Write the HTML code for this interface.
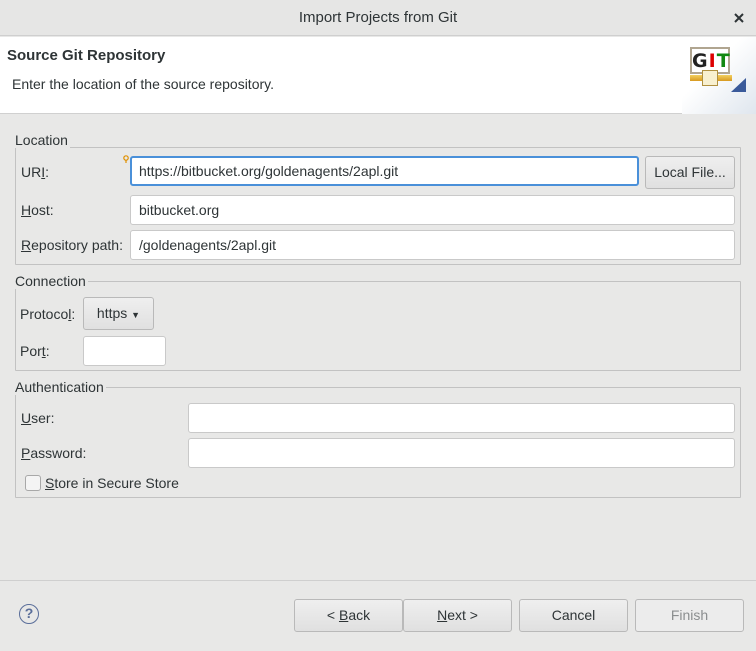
<!DOCTYPE html>
<html><head><meta charset="utf-8"><style>
*{box-sizing:border-box;margin:0;padding:0}
body{width:756px;height:651px;overflow:hidden;background:#e8e8e7;font-family:"Liberation Sans",sans-serif;font-size:14px;color:#2e3436;position:relative}
.a{position:absolute}
.title{left:0;top:0;width:756px;height:36px;background:#e6e6e5;border-bottom:1px solid #cfcfcf;text-align:center;line-height:36px;color:#2e3436;font-size:15px}
.head{left:0;top:37px;width:756px;height:77px;background:#fff;border-bottom:1px solid #d0d0d0}
.grp{border:1px solid #c2c2c2;border-radius:1px}
.leg{background:#e8e8e7;padding-right:2px;line-height:16px}
.inp{background:#fff;border:1px solid #c9c9c9;border-radius:3px;height:30px;line-height:28px;padding-left:8px}
.btn{border:1px solid #b9b9b9;border-radius:3px;background:linear-gradient(#efefef,#e0e0e0);text-align:center;line-height:31px;height:33px}
u{text-decoration:underline}
</style></head><body>
<div class="a title">Import Projects from Git</div>
<svg class="a" style="left:734px;top:13px" width="10" height="10"><path d="M1 1L9 9M9 1L1 9" stroke="#2e3436" stroke-width="2"/></svg>
<div class="a head">
 <div class="a" style="left:7px;top:10px;font-weight:bold;font-size:15px">Source Git Repository</div>
 <div class="a" style="left:12px;top:39px">Enter the location of the source repository.</div>
 <div class="a" style="left:682px;top:0;width:74px;height:77px;background:linear-gradient(135deg,#fff 40%,#dfe6ee 100%)"></div>
 <div class="a" style="left:690px;top:10px;width:40px;height:27px;border:2px solid #b0a590;background:#fff;font-weight:bold;font-size:19px;line-height:24px;text-align:center;letter-spacing:1px;font-family:'DejaVu Sans',sans-serif"><span style="color:#222">G</span><span style="color:#d00">I</span><span style="color:#181">T</span></div>
 <div class="a" style="left:711px;top:37px;width:2px;height:4px;background:#e8b830"></div>
 <div class="a" style="left:690px;top:38px;width:42px;height:6px;background:linear-gradient(#f2d060,#d89a20)"></div>
 <div class="a" style="left:702px;top:33px;width:16px;height:16px;background:#f8f0d0;border:1px solid #b09040"></div>
 <svg class="a" style="left:731px;top:41px" width="15" height="14"><polygon points="15,0 15,14 0,14" fill="#3a5a9a"/></svg>
</div>

<div class="a grp" style="left:15px;top:147px;width:726px;height:118px"></div>
<div class="a leg" style="left:15px;top:132px">Location</div>
<svg class="a" style="left:123px;top:155px" width="6" height="8"><circle cx="3" cy="3" r="2.2" fill="none" stroke="#e09000" stroke-width="1.2"/><path d="M3 5V8" stroke="#e09000" stroke-width="1.2"/></svg>
<div class="a" style="left:21px;top:164px">UR<u>I</u>:</div>
<div class="a inp" style="left:130px;top:156px;width:509px;border:2px solid #4a90d9;line-height:26px;padding-left:7px">https://bitbucket.org/goldenagents/2apl.git</div>
<div class="a btn" style="left:645px;top:156px;width:90px">Local File...</div>
<div class="a" style="left:21px;top:202px"><u>H</u>ost:</div>
<div class="a inp" style="left:130px;top:195px;width:605px">bitbucket.org</div>
<div class="a" style="left:21px;top:237px"><u>R</u>epository path:</div>
<div class="a inp" style="left:130px;top:230px;width:605px">/goldenagents/2apl.git</div>

<div class="a grp" style="left:15px;top:281px;width:726px;height:90px"></div>
<div class="a leg" style="left:15px;top:273px">Connection</div>
<div class="a" style="left:20px;top:306px">Protoco<u>l</u>:</div>
<div class="a btn" style="left:83px;top:297px;width:71px">https <span style="font-size:9px">▼</span></div>
<div class="a" style="left:20px;top:343px">Por<u>t</u>:</div>
<div class="a inp" style="left:83px;top:336px;width:83px"></div>

<div class="a grp" style="left:15px;top:387px;width:726px;height:111px"></div>
<div class="a leg" style="left:15px;top:379px">Authentication</div>
<div class="a" style="left:21px;top:410px"><u>U</u>ser:</div>
<div class="a inp" style="left:188px;top:403px;width:547px"></div>
<div class="a" style="left:21px;top:445px"><u>P</u>assword:</div>
<div class="a inp" style="left:188px;top:438px;width:547px"></div>
<div class="a" style="left:25px;top:475px;width:16px;height:16px;border:1px solid #a8a8a8;border-radius:3px;background:#f4f4f4"></div>
<div class="a" style="left:45px;top:475px"><u>S</u>tore in Secure Store</div>

<div class="a" style="left:0;top:580px;width:756px;height:1px;background:#cfcfcf"></div>
<div class="a" style="left:19px;top:604px;width:20px;height:20px;border:1.5px solid #5a6e9a;border-radius:50%;color:#5a6e9a;font-weight:bold;text-align:center;line-height:17px;font-size:14px">?</div>
<div class="a btn" style="left:294px;top:599px;width:109px">&lt; <u>B</u>ack</div>
<div class="a btn" style="left:403px;top:599px;width:109px"><u>N</u>ext &gt;</div>
<div class="a btn" style="left:519px;top:599px;width:109px">Cancel</div>
<div class="a btn" style="left:635px;top:599px;width:109px;color:#8b8e8f;background:#ececec">Finish</div>
</body></html>
